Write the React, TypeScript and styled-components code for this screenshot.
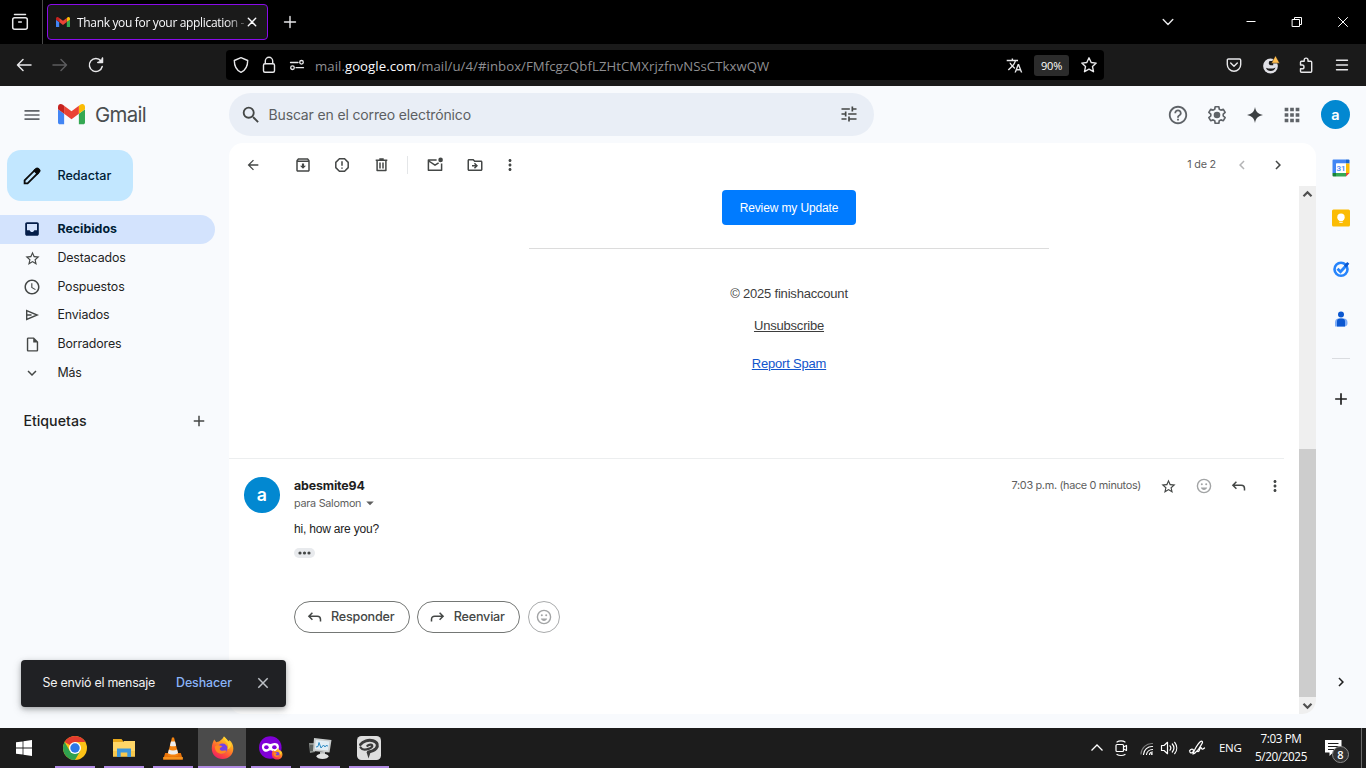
import React from "react";
import styled, { createGlobalStyle } from "styled-components";
import {
  MdAccessTime, MdAdd, MdApps, MdArrowBack, MdArrowDropDown, MdChevronLeft, MdChevronRight,
  MdHelpOutline, MdKeyboardArrowDown, MdMenu, MdMoreVert, MdOutlineArchive,
  MdOutlineDriveFileMove, MdOutlineInsertDriveFile, MdSearch, MdStarBorder, MdTranslate, MdTune,
} from "react-icons/md";

const sans = `Inter, "Liberation Sans", sans-serif`;
const system = `"Open Sans", "Noto Sans", sans-serif`;
const mailFont = `"Liberation Sans", Arial, sans-serif`;

const GlobalStyle = createGlobalStyle`
  * { box-sizing: border-box; }
  html, body { margin: 0; padding: 0; background: #f8fafd; overflow: hidden; }
  svg { display: block; flex: none; }
  button { font: inherit; margin: 0; padding: 0; border: 0; background: none; color: inherit; }
`;

const Screen = styled.div`
  width: 1366px;
  height: 768px;
  display: flex;
  flex-direction: column;
  position: relative;
  overflow: hidden;
  white-space: nowrap;
  font-family: ${sans};
`;

/* A 20px wide icon cell; $gap is the space before it */
const IconButton = styled.button<{ $gap?: number; $color?: string; $dy?: number }>`
  flex: none;
  width: 20px;
  height: 20px;
  margin-left: ${(p) => p.$gap ?? 0}px;
  margin-top: ${(p) => p.$dy ?? 0}px;
  display: flex;
  align-items: center;
  justify-content: center;
  color: ${(p) => p.$color ?? "#444746"};
`;
const Spacer = styled.div<{ $w?: number }>`
  flex: ${(p) => (p.$w ? `0 0 ${p.$w}px` : "1")};
`;

/* ---------- Browser chrome ---------- */
const TabStrip = styled.header`
  height: 44px;
  flex: none;
  background: #000;
  color: #fbfbfe;
  display: flex;
  align-items: center;
`;
const RecentSlot = styled.div`
  width: 43px;
  height: 44px;
  padding-left: 10px;
  display: flex;
  align-items: center;
  border-right: 1px solid #4a4a4a;
`;
const Tab = styled.div`
  width: 221px;
  height: 36px;
  margin-left: 4px;
  padding: 0 5px 0 8px;
  border: 1px solid #8a0bea;
  border-radius: 4px;
  background: #1a1a1a;
  display: flex;
  align-items: center;
`;
const TabTitle = styled.span`
  flex: none;
  width: 168px;
  margin: 2px 0 0 7px;
  font: 12px/18px ${system};
  letter-spacing: -0.33px;
  mask-image: linear-gradient(90deg, #000 148px, transparent 174px);
`;
const NavBar = styled.div`
  height: 42px;
  flex: none;
  background: #1a1a1a;
  display: flex;
  align-items: center;
`;
const UrlBar = styled.div`
  width: 878px;
  height: 30px;
  margin-left: 120px;
  background: #000;
  border-radius: 4px;
  display: flex;
  align-items: center;
`;
const Url = styled.span`
  margin: 2px 0 0 8px;
  font: 13.2px/20px ${system};
  letter-spacing: 0.05px;
  color: #8f8f92;
  b { color: #fbfbfe; font-weight: 400; }
`;
const Zoom = styled.span`
  width: 35px;
  height: 21px;
  margin-left: 10px;
  border-radius: 3px;
  background: #2b2b2b;
  color: #fff;
  font: 11px/22px ${system};
  letter-spacing: -0.2px;
  text-align: center;
`;

/* ---------- Gmail shell ---------- */
const MailApp = styled.div`
  height: 642px;
  flex: none;
  display: flex;
  flex-direction: column;
  background: #f8fafd;
  color: #1f1f1f;
`;
const TopBar = styled.div`
  height: 57px;
  flex: none;
  display: flex;
  align-items: center;
`;
const Brand = styled.div`
  width: 229px;
  display: flex;
  align-items: center;
  padding-left: 22px;
`;
const Wordmark = styled.span`
  margin: 1px 0 0 10px;
  font: 400 20.4px/26px ${sans};
  letter-spacing: -0.7px;
  color: #4b4e50;
`;
const SearchBox = styled.div`
  width: 645px;
  height: 43px;
  border-radius: 22px;
  background: #e9eef6;
  display: flex;
  align-items: center;
  padding-left: 10.5px;
`;
const SearchHint = styled.span`
  margin: 0 0 0 7px;
  font-size: 14px;
  letter-spacing: -0.15px;
  color: #5c5f62;
`;
const Avatar = styled.div<{ $size: number }>`
  flex: none;
  width: ${(p) => p.$size}px;
  height: ${(p) => p.$size}px;
  border-radius: 50%;
  background: #0288d1;
  color: #fff;
  display: flex;
  align-items: center;
  justify-content: center;
  font-size: ${(p) => p.$size * 0.5}px;
  font-weight: 600;
`;
const Body = styled.div`
  flex: 1;
  min-height: 0;
  display: flex;
`;

/* ---------- Left navigation ---------- */
const Sidebar = styled.nav`
  width: 229px;
  flex: none;
  padding-top: 7px;
`;
const Compose = styled.button`
  width: 126px;
  height: 51px;
  margin: 0 0 14px 7px;
  padding-left: 15px;
  border-radius: 14px;
  background: #c2e7ff;
  color: #001d35;
  display: flex;
  align-items: center;
  font: 500 12.6px/18px ${sans};
  span { margin-left: 15.5px; letter-spacing: -0.03px; }
`;
const Folder = styled.div<{ $active?: boolean }>`
  width: 215px;
  height: 28.7px;
  padding-left: 22px;
  border-radius: 0 15px 15px 0;
  background: ${(p) => (p.$active ? "#d3e3fd" : "transparent")};
  color: ${(p) => (p.$active ? "#001d35" : "#1f1f1f")};
  font-size: 12.4px;
  font-weight: ${(p) => (p.$active ? 700 : 400)};
  letter-spacing: ${(p) => (p.$active ? 0 : -0.12)}px;
  display: flex;
  align-items: center;
  span { margin-left: 15.4px; margin-top: -1px; }
`;
const LabelsHead = styled.div`
  margin-top: 23px;
  height: 22px;
  padding-left: 23.4px;
  display: flex;
  align-items: center;
  font-size: 14.2px;
  font-weight: 500;
  letter-spacing: 0;
  span { width: 165.6px; margin-top: -1px; }
`;

/* ---------- Reading pane ---------- */
const Pane = styled.main`
  width: 1087px;
  height: 571px;
  flex: none;
  border-radius: 14px;
  background: #fff;
  overflow: hidden;
  display: flex;
  flex-direction: column;
`;
const Toolbar = styled.div`
  height: 43px;
  flex: none;
  display: flex;
  align-items: center;
  padding: 0 28px 0 14px;
`;
const ToolDivider = styled.div`
  width: 1px;
  height: 18px;
  margin: 0 17px 0 16px;
  background: #e4e6e8;
`;
const Count = styled.span`
  font-size: 10.8px;
  letter-spacing: -0.2px;
  color: #5e5e5e;
`;
const PaneBody = styled.div`
  flex: 1;
  min-height: 0;
  display: flex;
`;
const Thread = styled.div` width: 1070px; `;
const ScrollTrack = styled.div`
  width: 17px;
  background: #efefef;
  display: flex;
  flex-direction: column;
  align-items: center;
  justify-content: space-between;
`;
const ScrollThumb = styled.div`
  width: 17px;
  height: 248px;
  margin-top: auto;
  background: #cdcdcd;
`;
const ScrollArrow = styled.div`
  width: 17px;
  height: 17px;
  display: flex;
  align-items: center;
  justify-content: center;
`;
const Newsletter = styled.article`
  width: 1055px;
  height: 273px;
  padding: 4px 0 0 65px;
  border-bottom: 1px solid #eceeef;
  display: flex;
  flex-direction: column;
  align-items: center;
  font: 13px/18px ${mailFont};
  letter-spacing: -0.2px;
  color: #3d3d3d;
`;
const ReviewButton = styled.button`
  width: 134px;
  height: 35px;
  border-radius: 4px;
  background: #007bff;
  color: #fff;
  font: 12px/36px ${mailFont};
  letter-spacing: -0.13px;
`;
const Rule = styled.div`
  width: 520px;
  height: 1px;
  margin: 23px 0 36px;
  background: #dcdcdc;
`;
const MailLink = styled.a<{ $color: string; $gap: number }>`
  margin-top: ${(p) => p.$gap}px;
  color: ${(p) => p.$color};
  text-decoration: underline;
`;
const Message = styled.article`
  display: flex;
  padding: 18px 14px 0 15px;
`;
const MessageMain = styled.div`
  flex: 1;
  margin-left: 14.5px;
`;
const MessageHead = styled.div`
  height: 18px;
  display: flex;
  align-items: center;
`;
const Sender = styled.strong`
  margin-top: -2px;
  font-size: 12.4px;
  font-weight: 700;
  letter-spacing: -0.15px;
`;
const SentAt = styled.span`
  margin-top: -2px;
  font-size: 10.9px;
  letter-spacing: -0.33px;
  color: #5e5e5e;
`;
const Recipient = styled.div`
  height: 18px;
  margin-top: -1px;
  display: flex;
  align-items: center;
  font-size: 10.8px;
  letter-spacing: -0.26px;
  color: #5e5e5e;
`;
const MessageText = styled.p`
  margin: 8px 0 0;
  font: 12px/18px ${mailFont};
  letter-spacing: -0.2px;
  color: #222;
`;
const Ellipsis = styled.div`
  width: 21px;
  height: 10px;
  margin-top: 10px;
  border-radius: 5px;
  background: #e8eaed;
  display: flex;
  align-items: center;
  justify-content: center;
`;
const Actions = styled.div`
  display: flex;
  margin-top: 43px;
`;
const Pill = styled.button<{ $w: number; $faint?: boolean }>`
  width: ${(p) => p.$w}px;
  height: 32px;
  margin-right: 7px;
  margin-left: ${(p) => (p.$faint ? 1 : 0)}px;
  border: 1px solid ${(p) => (p.$faint ? "#a9abac" : "#747775")};
  border-radius: 16px;
  color: ${(p) => (p.$faint ? "#a2a4a5" : "#444746")};
  display: flex;
  align-items: center;
  justify-content: center;
  gap: 7.5px;
  padding-right: ${(p) => (p.$faint ? 0 : 4)}px;
  font: 500 12.6px/18px ${sans};
  letter-spacing: -0.2px;
`;

/* ---------- Right rail ---------- */
const Rail = styled.aside`
  width: 50px;
  display: flex;
  flex-direction: column;
  align-items: center;
  padding-top: 15px;
`;
const RailItem = styled.div`
  height: 20px;
  margin-bottom: 30.3px;
  display: flex;
  align-items: center;
`;
const RailRule = styled.div`
  width: 18px;
  height: 1px;
  margin-top: -1.2px;
  background: #dadce0;
`;

/* ---------- Snackbar ---------- */
const Snackbar = styled.div`
  position: absolute;
  left: 21px;
  top: 660px;
  width: 265px;
  height: 47px;
  padding: 0 0 1px 21.5px;
  border-radius: 4px;
  background: #202124;
  color: #f2f2f2;
  box-shadow: 0 2px 5px rgba(60, 64, 67, 0.35), 0 3px 10px rgba(60, 64, 67, 0.18);
  display: flex;
  align-items: center;
  font-size: 12.4px;
  letter-spacing: -0.22px;
`;
const Notice = styled.span` margin-top: -1px; `;
const Undo = styled.span`
  margin: -1px 0 0 21px;
  color: #8ab4f8;
  font-weight: 500;
  letter-spacing: -0.1px;
`;

/* ---------- Windows taskbar ---------- */
const Taskbar = styled.footer`
  height: 40px;
  flex: none;
  background: #1c1c1c;
  color: #fff;
  display: flex;
  align-items: center;
  font: 12px/18px ${system};
`;
const TaskApp = styled.div<{ $active?: boolean; $running?: boolean }>`
  width: ${(p) => (p.$active ? 48 : 49)}px;
  margin-left: ${(p) => (p.$active ? 1 : 0)}px;
  height: 40px;
  display: flex;
  align-items: center;
  justify-content: center;
  background-color: ${(p) => (p.$active ? "#4b4b4b" : "transparent")};
  background-image: ${(p) => (p.$running ? "linear-gradient(#b18be3, #b18be3)" : "none")};
  background-size: ${(p) => (p.$active ? "48px 2px" : "40px 2px")};
  background-position: bottom center;
  background-repeat: no-repeat;
`;
const StartButton = styled.div`
  width: 50px;
  padding-left: 16px;
`;
const Language = styled.span`
  margin-left: 12px;
  width: 24px;
  font-size: 11.5px;
  letter-spacing: -0.3px;
`;
const Clock = styled.div`
  width: 66px;
  margin: -2px 0 0 5px;
  text-align: center;
  line-height: 18px;
  letter-spacing: -0.38px;
  font-size: 11.7px;
`;
const Notices = styled.div`
  position: relative;
  width: 34px;
  height: 40px;
  margin: 0 5px 0 8px;
`;
const NoticeIcon = styled.div` padding: 12px 0 0 3px; `;
const NoticeBadge = styled.span`
  position: absolute;
  left: 10px;
  top: 18px;
  width: 17px;
  height: 17px;
  border: 1px solid #8b8b8b;
  border-radius: 50%;
  background: #333;
  font: 600 11px/15px ${system};
  text-align: center;
`;
const DesktopEdge = styled.div`
  width: 1px;
  height: 40px;
  margin-right: 4px;
  background: #6a6a6a;
`;

/* ---------- Drawings ---------- */
const GmailMark = ({ w }: { w: number }) => (
  <svg width={w} height={w * 0.75} viewBox="52 42 88 66">
    <path fill="#4285f4" d="M58 108h14V74L52 59v43c0 3.32 2.69 6 6 6" />
    <path fill="#34a853" d="M120 108h14c3.32 0 6-2.69 6-6V59l-20 15" />
    <path fill="#fbbc04" d="M120 48v26l20-15v-8c0-7.42-8.47-11.65-14.4-7.2" />
    <path fill="#ea4335" d="M72 74V48l24 18 24-18v26L96 92" />
    <path fill="#c5221f" d="M52 51v8l20 15V48l-5.6-4.2c-5.94-4.45-14.4-.22-14.4 7.2" />
  </svg>
);

type LineProps = { size?: number; box?: string; w?: number; color?: string; children: React.ReactNode };
const Line = ({ size = 18, box = "0 0 18 18", w = 1.3, color = "currentColor", children }: LineProps) => (
  <svg width={size} height={size} viewBox={box} fill="none" stroke={color} strokeWidth={w} strokeLinecap="round" strokeLinejoin="round">
    {children}
  </svg>
);

const ReplyIcon = () => <Line w={1.5}><path d="M6.4 4.700 2.900 8.200l3.500 3.500M3.500 8.200h7.800c1.900 0 3.200 1.300 3.200 3.200v2.200" strokeLinecap="butt" strokeLinejoin="miter" /></Line>;
const ForwardIcon = () => <Line w={1.5}><path d="M11.600 4.700l3.500 3.500-3.500 3.500M14.500 8.200H6.700c-1.900 0-3.200 1.300-3.200 3.200v2.200" strokeLinecap="butt" strokeLinejoin="miter" /></Line>;
const SmileIcon = () => (
  <Line w={1.4}>
    <circle cx="9" cy="9" r="6.6" />
    <path d="M5.8 10.5h6.4c-.5 1.6-1.7 2.4-3.2 2.4s-2.7-.8-3.2-2.4z" fill="currentColor" stroke="none" />
    <circle cx="6.8" cy="7.2" r="1" fill="currentColor" stroke="none" />
    <circle cx="11.2" cy="7.2" r="1" fill="currentColor" stroke="none" />
  </Line>
);
const InboxIcon = () => (
  <svg width="18" height="18" viewBox="0 0 18 18">
    <path fill="#041e49" fillRule="evenodd" d="M4 2.200h10c1.100 0 1.800.7 1.800 1.800v10c0 1.100-.7 1.800-1.800 1.800H4c-1.100 0-1.800-.7-1.800-1.800V4c0-1.100.7-1.800 1.800-1.800zM4 4v6.300h2.700c.3 1.100 1.200 1.800 2.300 1.800s2-.7 2.300-1.800H14V4z" />
  </svg>
);
const PencilIcon = () => (
  <Line size={20} box="0 0 20 20" w={1.8} color="#0b0b0b">
    <path d="M2.6 17.4v-3L12.8 4.2l3 3L5.6 17.4z" strokeLinejoin="miter" />
    <path d="M12.3 4.7l2-2c.5-.5 1.2-.5 1.7 0l1.3 1.3c.5.5.5 1.2 0 1.7l-2 2z" fill="#0b0b0b" />
  </Line>
);
const SpamIcon = () => (
  <Line w={1.5}>
    <path d="M6.4 2.8h5.2l3.6 3.6v5.2l-3.6 3.6H6.4l-3.6-3.6V6.4z" />
    <path d="M9 5.2v4.6M9 11.4v1.4" strokeLinecap="butt" />
  </Line>
);
const TrashIcon = () => (
  <Line w={1.5}>
    <path d="M3.700 4.2h11.600M7.300 3.1h4.400M5.100 4.4v10.200h8.800V4.4M8 6.6v5.8M11 6.6v5.8" strokeLinecap="butt" />
  </Line>
);
const UnreadIcon = () => (
  <Line w={1.5}>
    <path d="M10.6 3.9H2.4v10.4h13.2V7.4M2.8 5l6.2 4.2 3.6-2.4" strokeLinecap="butt" />
    <circle cx="14.6" cy="3.9" r="2.3" fill="currentColor" stroke="none" />
  </Line>
);
const GearIcon = () => (
  <svg width="22" height="22" viewBox="0 0 24 24" fill="none" stroke="#5f6368" strokeWidth="1.8" strokeLinejoin="round">
    <path d="M10 3h4l.5 2.7 1.8 1 2.6-.9 2 3.4-2.1 1.8v2l2.1 1.8-2 3.4-2.6-.9-1.8 1L14 21h-4l-.5-2.7-1.8-1-2.6.9-2-3.4L5.200 13v-2L3.100 9.200l2-3.400 2.600.9 1.800-1z" />
    <circle cx="12" cy="12" r="3.600" fill="#5f6368" stroke="none" />
  </svg>
);
const SparkIcon = () => (
  <svg width="18" height="18" viewBox="0 0 18 18"><path fill="#3c4043" d="M9 1c.9 4.900 3.100 7.100 8 8-4.900.9-7.100 3.100-8 8-.9-4.900-3.100-7.100-8-8 4.900-.9 7.100-3.100 8-8z" /></svg>
);
const SendIcon = () => <Line size={16} box="0 0 16 16" w={1.4}><path d="M2.700 3.600 13.200 8 2.700 12.400zM2.900 8h4.600" strokeLinejoin="miter" strokeLinecap="butt" /></Line>;

const CalendarIcon = () => (
  <svg width="18" height="18" viewBox="0 0 18 18">
    <path fill="#4285f4" d="M1.500.5h12.500v4H4.500V14H.5V1.500a1 1 0 0 1 1-1z" />
    <path fill="#1967d2" d="M14 .5h2.500a1 1 0 0 1 1 1v3H14z" />
    <path fill="#fbbc04" d="M14 4.500h3.500V14H14z" />
    <path fill="#34a853" d="M4 14h10v3.500H4z" />
    <path fill="#188038" d="M.5 14H4v3.500H1.500a1 1 0 0 1-1-1z" />
    <path fill="#ea4335" d="M14 14h3.500L14 17.500z" />
    <path fill="#fff" d="M4 4.500h10V14H4z" />
    <text x="9" y="12.200" fontSize="8" fontWeight="600" textAnchor="middle" fill="#4285f4" fontFamily="Roboto, sans-serif">31</text>
  </svg>
);
const KeepIcon = () => (
  <svg width="18" height="18" viewBox="0 0 18 18">
    <rect y=".5" width="18" height="17" rx="1.500" fill="#fbbc04" />
    <circle cx="9" cy="8.200" r="3.700" fill="#fff" />
    <path fill="#fff" d="M7.300 10h3.400v2H7.300zM7.300 12.700h3.400v1.100H7.300z" />
  </svg>
);
const TasksIcon = () => (
  <svg width="18" height="18" viewBox="0 0 18 18" fill="none">
    <circle cx="9" cy="9.200" r="6.500" stroke="#2684fc" strokeWidth="2.600" />
    <path d="M5.500 8.700l3 3 6.500-7" stroke="#2684fc" strokeWidth="2.900" />
    <path d="M13 6.500l3.300-3.600" stroke="#0b57d0" strokeWidth="2.800" />
  </svg>
);
const ContactsIcon = () => (
  <svg width="18" height="18" viewBox="0 0 18 18">
    <circle cx="9" cy="4.500" r="3" fill="#0b57d0" />
    <path fill="#7cacf8" d="M3 16.500v-4a4 4 0 0 1 4-4h4.500a4 4 0 0 1 4 4v1c0 2-1.500 3-3 3z" />
    <path fill="#0b57d0" d="M5 16.500v-5a3 3 0 0 1 3-3h2a3 3 0 0 1 3 3v5z" />
  </svg>
);

const ChromeLogo = () => (
  <svg width="24" height="24" viewBox="0 0 24 24">
    <circle cx="12" cy="12" r="12" fill="#fbc116" />
    <path fill="#e33b2e" d="M12 12 1.610 6A12 12 0 0 1 22.390 6H12z" />
    <path fill="#2fa14f" d="M1.610 6A12 12 0 0 0 12 24l5.200-9-5.200-3-5.200 3z" />
    <circle cx="12" cy="12" r="6" fill="#fff" />
    <circle cx="12" cy="12" r="4.700" fill="#2b78e9" />
  </svg>
);
const ExplorerLogo = () => (
  <svg width="22" height="20" viewBox="0 0 22 20">
    <path fill="#e9a91c" d="M0 1h8.500l1.500 2v3H0z" />
    <path fill="#ffd667" d="M0 4h10l1-1h11v15.500H0z" />
    <path fill="#f6c84e" d="M0 13h22v5.500H0z" />
    <path fill="#3c96dc" d="M4 10.500h14V19h-3.700v-4.500H7.700V19H4z" />
  </svg>
);
const ConeLogo = () => (
  <svg width="20" height="23" viewBox="0 0 20 23">
    <path fill="#e8730b" d="M2.200 16h15.600l2 6.500H.2z" />
    <path fill="#f7931e" d="M.2 20h19.600v2.500H.2z" />
    <path fill="#f58410" d="M9 .5h2L15.500 18c-3 2-8 2-11 0z" />
    <path fill="#eee" d="M8 4.400h4l1.100 4.300c-1.800.8-4.400.8-6.200 0zM5.900 12.500c2.200 1.200 6 1.200 8.200 0l1 3.800c-3 1.700-7.200 1.700-10.200 0z" />
  </svg>
);
const FoxArt = () => (
  <>
    <defs>
      <linearGradient id="foxBody" x1=".8" y1="0" x2=".2" y2="1">
        <stop offset="0" stopColor="#ffe33a" /><stop offset=".35" stopColor="#ff9b1f" />
        <stop offset=".7" stopColor="#ff4a3c" /><stop offset="1" stopColor="#e81a6b" />
      </linearGradient>
    </defs>
    <path fill="url(#foxBody)" d="M3.300 3.200 5.500 6c1-.7 2-.9 3-.9C10 3.500 12 3 13.500 0c2 2 3.500 3.200 4.300 5l1.500-1c2.500 2 4 5 4 8.500C23.300 19 18.500 23.500 12 23.500S.8 18.800.8 12.500C.8 8.500 2 6 3.300 3.200z" />
    <circle cx="12" cy="12.500" r="5.200" fill="#7542e5" />
    <path fill="#ff8a20" d="M4 10.500c2-1.800 5-1.500 8-.3l-2.500 1.900c-.7.600-.5 1.800.8 2.400 2 .9 4-.2 6 .2-1 2.500-3.500 3.800-6.300 3.300C6 17.300 4 14.500 4 10.500z" />
    <path fill="#ffd02e" d="M13.500 0c-1 3.500 2.800 5 4 8 .8 2 .3 4-.5 5.500 2.500-.5 4-2.700 4.200-5.300-.5-1-1.200-1.600-2-2.400-.6.300-1 .2-1.400-.8-.8-1.800-2.300-3-4.300-5z" />
  </>
);
const FirefoxLogo = () => <svg width="23" height="24" viewBox="0 0 24 24"><FoxArt /></svg>;
const PrivateLogo = () => (
  <svg width="24" height="24" viewBox="0 0 24 24">
    <circle cx="11.300" cy="11.500" r="11.300" fill="#8000d7" />
    <path fill="#fff" d="M2.900 10.500c0-2.500 2-3.600 4.300-3.600 2 0 2.700 1 4.200 1s2.200-1 4.200-1c2.300 0 4.300 1.100 4.300 3.600 0 3.200-1.800 5.300-4.300 5.300-2 0-2.700-1.600-4.200-1.600s-2.200 1.600-4.200 1.600c-2.500 0-4.300-2.100-4.300-5.300z" />
    <ellipse cx="7.400" cy="11.200" rx="2.300" ry="2" fill="#8000d7" />
    <ellipse cx="15.400" cy="11.200" rx="2.300" ry="2" fill="#8000d7" />
    <g transform="translate(12.500 12.500) scale(.47)"><FoxArt /></g>
  </svg>
);
const MonitorLogo = () => (
  <svg width="24" height="23" viewBox="0 0 24 23">
    <path fill="#8a8f8c" d="M1 6h5l1 9-5 1z" /><path fill="#5d6360" d="M2 8h4v6H2z" />
    <path fill="#c9cdcd" d="M6 1l17.500 2-2 12.500L5 14z" />
    <path fill="#e2eef5" d="M7.800 3 21.400 4.500 20 13.400 6.900 12.200z" />
    <path fill="none" stroke="#2a8ac4" strokeWidth="1" d="M8 10l2-.5 1-4 2 5.500 2.500-3 1.500 2 1-1.500 2 .5" />
    <path fill="#b9bcbc" d="M12 15h5v3h-5z" /><ellipse cx="14.500" cy="19.300" rx="6" ry="2.700" fill="#dfe1e1" />
  </svg>
);
const PaintLogo = () => (
  <svg width="24" height="24" viewBox="0 0 24 24" fill="none">
    <rect width="24" height="24" rx="4.500" fill="#dedede" />
    <path d="M3.500 8.500C6 5 11.500 3.500 16 4.700c4.500 1.300 5.500 4.800 3 7.800-1.800 2-4.500 3-7.500 3.400" stroke="#3a3a3a" strokeWidth="3" strokeLinecap="round" />
    <path d="M3.600 11.500c1.500 2.500 5 2.500 8.500 1.200 2.500-1 3.700-2.400 3-3.400-.7-.9-3-.5-4.700.4" stroke="#3a3a3a" strokeWidth="2.300" strokeLinecap="round" />
    <path d="M9.500 16l4.500-1-2.500 7.500z" fill="#3a3a3a" />
  </svg>
);
const WindowsLogo = () => (
  <svg width="16" height="16" viewBox="0 0 16 16" fill="#fff">
    <path d="M0 2.300 6.600 1.400v6.100H0zM7.400 1.300 16 0v7.500H7.400zM0 8.400h6.600v6.200L0 13.700zM7.400 8.400H16V16l-8.600-1.200z" />
  </svg>
);

const folders: { name: string; icon: React.ReactNode; active?: boolean }[] = [
  { name: "Recibidos", icon: <InboxIcon />, active: true },
  { name: "Destacados", icon: <MdStarBorder size={17} /> },
  { name: "Pospuestos", icon: <MdAccessTime size={18} /> },
  { name: "Enviados", icon: <SendIcon /> },
  { name: "Borradores", icon: <MdOutlineInsertDriveFile size={17} /> },
  { name: "Más", icon: <MdKeyboardArrowDown size={18} /> },
];

const light = "#e8e8ea";

export default function App() {
  return (
    <Screen>
      <GlobalStyle />
      <TabStrip>
        <RecentSlot>
          <Line size={20} box="0 0 20 20" w={1.500} color={light}>
            <path d="M4.500 2.600h11" />
            <rect x="2.700" y="5.800" width="14.600" height="11.400" rx="2" />
            <path d="M8.700 10h2.600" />
          </Line>
        </RecentSlot>
        <Tab>
          <GmailMark w={14} />
          <TabTitle>Thank you for your application -</TabTitle>
          <IconButton $gap={-3} $color="#fbfbfe">
            <Line size={16} box="0 0 16 16" w={1.400}><path d="M4.300 4.300l7.400 7.400M11.700 4.300l-7.400 7.400" /></Line>
          </IconButton>
        </Tab>
        <IconButton $gap={12} $color={light}>
          <Line w={1.400}><path d="M9 3.500v11M3.500 9h11" /></Line>
        </IconButton>
        <Spacer />
        <IconButton $color={light}><Line w={1.400}><path d="M4.200 6.500 9 11.500l4.800-5" /></Line></IconButton>
        <IconButton $gap={63} $color="#fff"><Line w={1}><path d="M4.500 8.500h9" strokeLinecap="butt" /></Line></IconButton>
        <IconButton $gap={26} $color="#fff">
          <Line w={1}><path d="M4.500 6.500h7v7h-7zM6.500 6.500v-2h7v7h-2" strokeLinejoin="miter" /></Line>
        </IconButton>
        <IconButton $gap={26} $color="#fff"><Line w={1}><path d="M4.500 4.500l9 9M13.500 4.500l-9 9" /></Line></IconButton>
        <Spacer $w={13} />
      </TabStrip>

      <NavBar>
        <IconButton $gap={14} $color={light}><Line w={1.500}><path d="M16 9H2.500M8 3.500 2.500 9 8 14.500" /></Line></IconButton>
        <IconButton $gap={16} $color="#5c5c5e"><Line w={1.500}><path d="M2 9h13.500M10 3.500 15.500 9 10 14.500" /></Line></IconButton>
        <IconButton $gap={16} $color={light}>
          <Line w={1.500}><path d="M15.200 10.500A6.500 6.500 0 1 1 14 5M10.800 6.500h4.700V2" /><path d="M11.500 6.300h4V2.300z" fill="currentColor" strokeWidth=".5" /></Line>
        </IconButton>
        <UrlBar>
          <IconButton $gap={5} $color={light}>
            <Line w={1.400}><path d="M9 1.700 15.700 4.500c0 6-2.200 9.800-6.700 11.900C4.500 14.300 2.300 10.500 2.300 4.500z" /></Line>
          </IconButton>
          <IconButton $gap={8} $color={light}>
            <Line w={1.400}><rect x="3.500" y="7.700" width="11" height="8.500" rx="1.500" /><path d="M5.300 7.500V5a3.700 3.700 0 0 1 7.400 0v2.500" /></Line>
          </IconButton>
          <IconButton $gap={8} $color={light}>
            <Line w={1.300}><path d="M2.500 6.500h7.500M8 11.700h7.500" /><circle cx="13.500" cy="6.300" r="1.800" /><circle cx="4.500" cy="11.700" r="1.800" /></Line>
          </IconButton>
          <Url>mail.<b>google.com</b>/mail/u/4/#inbox/FMfcgzQbfLZHtCMXrjzfnvNSsCTkxwQW</Url>
          <Spacer />
          <IconButton $color={light}><MdTranslate size={17} /></IconButton>
          <Zoom>90%</Zoom>
          <IconButton $gap={10} $color={light}>
            <Line w={1.400}><path d="M9 1.800l2.200 4.700 5 .6-3.700 3.500 1 5.100L9 13.200l-4.500 2.500 1-5.100L1.800 7.100l5-.6z" /></Line>
          </IconButton>
          <Spacer $w={5} />
        </UrlBar>
        <Spacer />
        <IconButton $color={light}>
          <Line w={1.400}><path d="M3.500 3h11c.7 0 1.200.5 1.200 1.200V8.500c0 3.700-3 6.700-6.700 6.700s-6.700-3-6.700-6.700V4.200C2.300 3.500 2.800 3 3.500 3zM5.700 7 9 10.200 12.300 7" /></Line>
        </IconButton>
        <IconButton $gap={17}>
          <svg width="18" height="18" viewBox="0 0 18 18">
            <circle cx="8.500" cy="10" r="7.400" fill="#e0e0e6" />
            <path fill="#1a1a1a" d="M7.500 5h3.700v4.200H8.700c-1.200 0-1.900-.8-1.900-1.900 0-1 .2-1.700.7-2.300zM4 11.700c3 1.300 7 1.200 9.500-.3-.7 2.300-2.600 3.600-4.800 3.600S4.600 13.800 4 11.700z" />
            <path fill="#ffbd4f" stroke="#1a1a1a" strokeWidth=".5" d="M13.500-.3 17.700 7.200H9.300z" />
          </svg>
        </IconButton>
        <IconButton $gap={15} $color={light}>
          <Line w={1.400}><path d="M3.500 9V6.200c0-.6.400-1 1-1h2.700V4a1.900 1.900 0 0 1 3.800 0v1.200h2.700c.6 0 1 .4 1 1v9c0 .6-.4 1-1 1H4.500c-.6 0-1-.4-1-1v-2.400h1.600a1.900 1.900 0 0 0 0-3.800z" /></Line>
        </IconButton>
        <IconButton $gap={16} $color={light}><Line w={1.400}><path d="M3.500 4.300h11M3.500 9h11M3.500 13.700h11" /></Line></IconButton>
        <Spacer $w={14} />
      </NavBar>

      <MailApp>
        <TopBar>
          <Brand>
            <MdMenu size={20} color="#5f6368" />
            <Spacer $w={16} />
            <GmailMark w={27} />
            <Wordmark>Gmail</Wordmark>
          </Brand>
          <SearchBox>
            <MdSearch size={22} color="#444746" />
            <SearchHint>Buscar en el correo electrónico</SearchHint>
            <Spacer />
            <IconButton $dy={-1}><MdTune size={20} /></IconButton>
            <Spacer $w={15} />
          </SearchBox>
          <Spacer />
          <IconButton $color="#5f6368"><MdHelpOutline size={22} /></IconButton>
          <IconButton $gap={19}><GearIcon /></IconButton>
          <IconButton $gap={18}><SparkIcon /></IconButton>
          <IconButton $gap={17} $color="#5f6368"><MdApps size={22} /></IconButton>
          <Spacer $w={19} />
          <Avatar $size={29}>a</Avatar>
          <Spacer $w={16} />
        </TopBar>

        <Body>
          <Sidebar>
            <Compose><PencilIcon /><span>Redactar</span></Compose>
            {folders.map((f) => (
              <Folder key={f.name} $active={f.active}>
                <IconButton>{f.icon}</IconButton>
                <span>{f.name}</span>
              </Folder>
            ))}
            <LabelsHead><span>Etiquetas</span><IconButton $dy={-1}><MdAdd size={18} /></IconButton></LabelsHead>
          </Sidebar>

          <Pane>
            <Toolbar>
              <IconButton><MdArrowBack size={16} /></IconButton>
              <IconButton $gap={30}><MdOutlineArchive size={18} /></IconButton>
              <IconButton $gap={19}><SpamIcon /></IconButton>
              <IconButton $gap={19}><TrashIcon /></IconButton>
              <ToolDivider />
              <IconButton><UnreadIcon /></IconButton>
              <IconButton $gap={20}><MdOutlineDriveFileMove size={18} /></IconButton>
              <IconButton $gap={15}><MdMoreVert size={18} /></IconButton>
              <Spacer />
              <Count>1 de 2</Count>
              <IconButton $gap={16} $color="#b4b5b6"><MdChevronLeft size={18} /></IconButton>
              <IconButton $gap={16}><MdChevronRight size={18} /></IconButton>
            </Toolbar>
            <PaneBody>
              <Thread>
                <Newsletter>
                  <ReviewButton>Review my Update</ReviewButton>
                  <Rule />
                  <span>© 2025 finishaccount</span>
                  <MailLink $color="#3d3d3d" $gap={14}>Unsubscribe</MailLink>
                  <MailLink $color="#1155cc" $gap={20}>Report Spam</MailLink>
                </Newsletter>
                <Message>
                  <Avatar $size={35.500}>a</Avatar>
                  <MessageMain>
                    <MessageHead>
                      <Sender>abesmite94</Sender>
                      <Spacer />
                      <SentAt>7:03 p.m. (hace 0 minutos)</SentAt>
                      <IconButton $gap={17}><MdStarBorder size={17} /></IconButton>
                      <IconButton $gap={16} $color="#a2a4a5"><SmileIcon /></IconButton>
                      <IconButton $gap={15}><ReplyIcon /></IconButton>
                      <IconButton $gap={16}><MdMoreVert size={18} /></IconButton>
                    </MessageHead>
                    <Recipient>para Salomon<MdArrowDropDown size={18} /></Recipient>
                    <MessageText>hi, how are you?</MessageText>
                    <Ellipsis>
                      <svg width="13" height="4" viewBox="0 0 13 4" fill="#444746"><circle cx="2" cy="2" r="1.600" /><circle cx="6.500" cy="2" r="1.600" /><circle cx="11" cy="2" r="1.600" /></svg>
                    </Ellipsis>
                    <Actions>
                      <Pill $w={116}><ReplyIcon />Responder</Pill>
                      <Pill $w={103}><ForwardIcon />Reenviar</Pill>
                      <Pill $w={32} $faint><SmileIcon /></Pill>
                    </Actions>
                  </MessageMain>
                </Message>
              </Thread>
              <ScrollTrack>
                <ScrollArrow><Line size={13} box="0 0 13 13" w={2.200} color="#505050"><path d="M2.500 8.300 6.500 4.300l4 4" strokeLinecap="butt" strokeLinejoin="miter" /></Line></ScrollArrow>
                <ScrollThumb />
                <ScrollArrow><Line size={13} box="0 0 13 13" w={2.200} color="#505050"><path d="M2.500 4.700 6.500 8.700l4-4" strokeLinecap="butt" strokeLinejoin="miter" /></Line></ScrollArrow>
              </ScrollTrack>
            </PaneBody>
          </Pane>

          <Rail>
            <RailItem><CalendarIcon /></RailItem>
            <RailItem><KeepIcon /></RailItem>
            <RailItem><TasksIcon /></RailItem>
            <RailItem><ContactsIcon /></RailItem>
            <RailRule />
            <IconButton $dy={30} $color="#1f1f1f"><MdAdd size={20} /></IconButton>
            <IconButton $dy={263} $color="#1f1f1f"><MdChevronRight size={18} /></IconButton>
          </Rail>
        </Body>
      </MailApp>

      <Taskbar>
        <StartButton><WindowsLogo /></StartButton>
        <TaskApp $running><ChromeLogo /></TaskApp>
        <TaskApp $running><ExplorerLogo /></TaskApp>
        <TaskApp $running><ConeLogo /></TaskApp>
        <TaskApp $running $active><FirefoxLogo /></TaskApp>
        <TaskApp $running><PrivateLogo /></TaskApp>
        <TaskApp $running><MonitorLogo /></TaskApp>
        <TaskApp $running><PaintLogo /></TaskApp>
        <Spacer />
        <IconButton $color="#fff"><Line w={1.300}><path d="M3.500 11.500 9 6l5.500 5.500" strokeLinecap="butt" strokeLinejoin="miter" /></Line></IconButton>
        <IconButton $gap={4} $color="#fff">
          <Line w={1.200}><rect x="4" y="5.500" width="7.500" height="7" rx="1" /><path d="M11.500 8l3-1.500v5l-3-1.500M5 3c2-1.500 6-1.500 8 0M5 15.500c2 1.300 6 1.300 8 0" /></Line>
        </IconButton>
        <IconButton $gap={6} $color="#fff">
          <Line w={1.200}>
            <path d="M3 15A11 11 0 0 1 14.500 4.500" stroke="#7d7d7d" /><path d="M5.500 15.500a8.500 8.500 0 0 1 9-8" />
            <path d="M8.500 15.500a6 6 0 0 1 6-5M11.500 15.500a3 3 0 0 1 3-2.500" /><circle cx="13.800" cy="15" r="1" fill="#fff" stroke="none" />
          </Line>
        </IconButton>
        <IconButton $gap={2} $color="#fff">
          <Line w={1.200}><path d="M1.500 6.500H4L7.500 3.300v11.400L4 11.500H1.500zM10 6.800c1 1.300 1 3.100 0 4.400M12.300 5c2 2.400 2 5.600 0 8M14.700 3.300c2.700 3.400 2.700 8 0 11.400" /></Line>
        </IconButton>
        <IconButton $gap={8} $color="#fff">
          <Line w={1.300}><path d="M1.500 12c1-2.500 4-2.500 4-.5s-3 3.500-3.500 1.500M5 15c1-4 5-10.500 7.500-12.500 1.500-1 2.500.3 1.700 1.800C12.700 7.500 9 12.500 6.500 14.500L5 15zM9.500 12.500c1.500.5 2-1.500 2.500-3 .5-1.200 1.500-1 1.500 0 .5 1 1.800.7 3-.5" /></Line>
        </IconButton>
        <Language>ENG</Language>
        <Clock>7:03 PM<br />5/20/2025</Clock>
        <Notices>
          <NoticeIcon>
            <svg width="17" height="17" viewBox="0 0 17 17"><path fill="#fff" d="M0 0h16.500v12.500H8L4.500 16v-3.500H0z" /><path stroke="#1c1c1c" d="M3 3.500h10.500M3 6.500h10.500M3 9.500h7" /></svg>
          </NoticeIcon>
          <NoticeBadge>8</NoticeBadge>
        </Notices>
        <DesktopEdge />
      </Taskbar>

      <Snackbar>
        <Notice>Se envió el mensaje</Notice>
        <Undo>Deshacer</Undo>
        <IconButton $gap={21} $color="#bdc1c6">
          <Line size={16} box="0 0 16 16" w={1.500}><path d="M3.300 3.300l9.400 9.400M12.700 3.300l-9.400 9.400" strokeLinecap="butt" /></Line>
        </IconButton>
      </Snackbar>
    </Screen>
  );
}
